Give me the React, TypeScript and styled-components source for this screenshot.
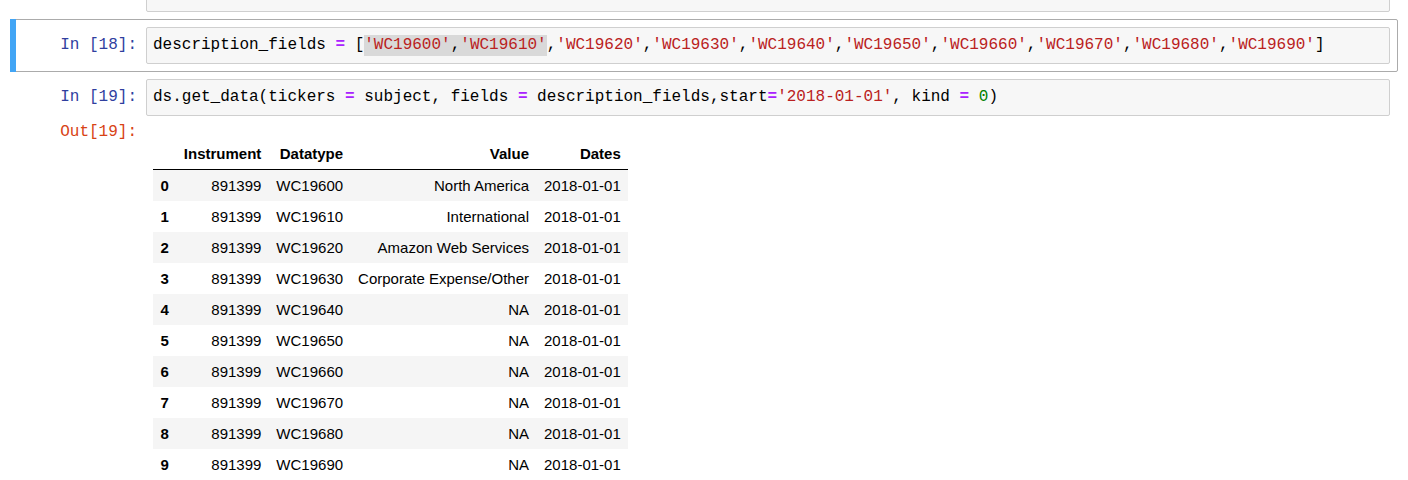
import React from 'react';
import styled, { createGlobalStyle, css } from 'styled-components';

const GlobalStyle = createGlobalStyle`
  html, body {
    margin: 0;
    padding: 0;
    background: #ffffff;
    overflow: hidden;
  }
  body {
    font-family: "Liberation Sans", Arial, sans-serif;
  }
`;

const MONO = `"Liberation Mono", "DejaVu Sans Mono", monospace`;

const Notebook = styled.div`
  display: flex;
  flex-direction: column;
  margin-top: -32px;
  padding: 0 10px;
`;

const Cell = styled.div<{ $selected?: boolean }>`
  position: relative;
  display: flex;
  flex-direction: column;
  border: 1px solid ${p => (p.$selected ? '#ababab' : 'transparent')};
  border-radius: 2px;
  padding: ${p => (p.$selected ? '7px 7px 7px 6px' : '6px 7px 6px 6px')};

  ${p => p.$selected && css`
    &::before {
      content: '';
      position: absolute;
      left: -1px;
      top: -1px;
      bottom: -1px;
      width: 6px;
      background: #42a5f5;
    }
  `}
`;

const Row = styled.div`
  display: flex;
  align-items: flex-start;
`;

const Prompt = styled.div<{ $out?: boolean }>`
  flex: none;
  box-sizing: border-box;
  width: 129px;
  padding: ${p => (p.$out ? '6px' : '8px')} 9px 0 0;
  text-align: right;
  font-family: ${MONO};
  font-size: 16px;
  line-height: 21px;
  white-space: pre;
  color: ${p => (p.$out ? '#d84315' : '#303f9f')};
`;

const InputArea = styled.div`
  flex: 1;
  min-width: 0;
  border: 1px solid #cfcfcf;
  border-radius: 2px;
  background: #f7f7f7;
  padding: 7px 6px;
  overflow: hidden;
`;

const CodeLine = styled.div`
  font-family: ${MONO};
  font-size: 16px;
  line-height: 21px;
  white-space: pre;
  color: #000000;
`;

const Token = styled.span<{ $kind: 'op' | 'str' | 'num' | 'plain' }>`
  color: ${p =>
    p.$kind === 'op' ? '#aa22ff' : p.$kind === 'str' ? '#ba2121' : p.$kind === 'num' ? '#008000' : '#000000'};
  font-weight: ${p => (p.$kind === 'op' ? 'bold' : 'normal')};
`;

const Selection = styled.span`
  display: inline-block;
  background: #d9d9d9;
  line-height: 21px;
  vertical-align: top;
`;

const OutputSubarea = styled.div`
  flex: 1;
  padding-left: 7px;
`;

const DataFrame = styled.table`
  margin-top: 22px;
  border-collapse: collapse;
  border-spacing: 0;
  font-family: "Liberation Sans", Arial, sans-serif;
  font-size: 15px;
  color: #000000;

  th, td {
    padding: 7.5px;
    line-height: 16px;
    text-align: right;
    vertical-align: middle;
    white-space: nowrap;
  }

  th {
    font-weight: bold;
  }

  thead th {
    border-bottom: 1px solid #000000;
  }

  tbody tr:nth-child(odd) {
    background: #f5f5f5;
  }
`;

const tokenize = (src: string) =>
  src.split(/('[^']*'|=|\b\d+\b)/).filter(Boolean).map((part, i) => {
    const kind = part === '=' ? 'op' : part.startsWith("'") ? 'str' : /^\d+$/.test(part) ? 'num' : 'plain';
    return <Token key={i} $kind={kind}>{part}</Token>;
  });

const codes = (start: number, count: number) =>
  Array.from({ length: count }, (_, i) => `'WC${start + i * 10}'`).join(',');

const rows = [
  'North America',
  'International',
  'Amazon Web Services',
  'Corporate Expense/Other',
  'NA',
  'NA',
  'NA',
  'NA',
  'NA',
  'NA',
];

export default function App() {
  return (
    <>
      <GlobalStyle />
      <Notebook>
        <Cell>
          <Row>
            <Prompt>In [17]:</Prompt>
            <InputArea>
              <CodeLine>{tokenize(`regional_fields = [${codes(19500, 6)}]`)}</CodeLine>
            </InputArea>
          </Row>
        </Cell>

        <Cell $selected>
          <Row>
            <Prompt>In [18]:</Prompt>
            <InputArea>
              <CodeLine>
                {tokenize('description_fields = [')}
                <Selection>{tokenize(codes(19600, 2))}</Selection>
                {tokenize(`,${codes(19620, 8)}]`)}
              </CodeLine>
            </InputArea>
          </Row>
        </Cell>

        <Cell>
          <Row>
            <Prompt>In [19]:</Prompt>
            <InputArea>
              <CodeLine>
                {tokenize("ds.get_data(tickers = subject, fields = description_fields,start='2018-01-01', kind = 0)")}
              </CodeLine>
            </InputArea>
          </Row>
          <Row>
            <Prompt $out>Out[19]:</Prompt>
            <OutputSubarea>
              <DataFrame>
                <thead>
                  <tr>
                    <th></th>
                    <th>Instrument</th>
                    <th>Datatype</th>
                    <th>Value</th>
                    <th>Dates</th>
                  </tr>
                </thead>
                <tbody>
                  {rows.map((value, i) => (
                    <tr key={i}>
                      <th>{i}</th>
                      <td>891399</td>
                      <td>WC{19600 + i * 10}</td>
                      <td>{value}</td>
                      <td>2018-01-01</td>
                    </tr>
                  ))}
                </tbody>
              </DataFrame>
            </OutputSubarea>
          </Row>
        </Cell>
      </Notebook>
    </>
  );
}
